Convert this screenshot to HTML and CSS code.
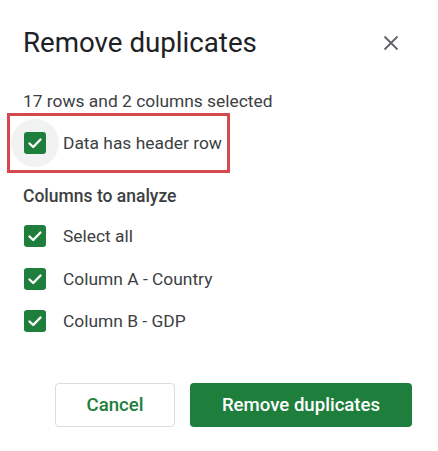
FILE: index.html
```html
<!DOCTYPE html>
<html>
<head>
<meta charset="utf-8">
<link rel="stylesheet" href="styles.css">
</head>
<body>
<div class="dialog">
  <div class="header">
    <div class="title">Remove duplicates</div>
    <svg class="close" width="16" height="16" viewBox="0 0 16 16"><path d="M1.5 1.5 L14.5 14.5 M14.5 1.5 L1.5 14.5" stroke="#5f6368" stroke-width="1.8" fill="none"/></svg>
  </div>
  <div class="subtitle">17 rows and 2 columns selected</div>
  <div class="highlight">
    <div class="halo">
      <span class="cb"><svg width="22" height="22" viewBox="0 0 22 22"><path d="M5.5 11.5 L9.2 15 L16.5 7.5" stroke="#fff" stroke-width="2.4" fill="none" stroke-linecap="round" stroke-linejoin="round"/></svg></span>
    </div>
    <span class="label">Data has header row</span>
  </div>
  <div class="section">Columns to analyze</div>
  <div class="rows">
    <div class="row">
      <span class="cb"><svg width="22" height="22" viewBox="0 0 22 22"><path d="M5.5 11.5 L9.2 15 L16.5 7.5" stroke="#fff" stroke-width="2.4" fill="none" stroke-linecap="round" stroke-linejoin="round"/></svg></span>
      <span class="label">Select all</span>
    </div>
    <div class="row">
      <span class="cb"><svg width="22" height="22" viewBox="0 0 22 22"><path d="M5.5 11.5 L9.2 15 L16.5 7.5" stroke="#fff" stroke-width="2.4" fill="none" stroke-linecap="round" stroke-linejoin="round"/></svg></span>
      <span class="label">Column A - Country</span>
    </div>
    <div class="row">
      <span class="cb"><svg width="22" height="22" viewBox="0 0 22 22"><path d="M5.5 11.5 L9.2 15 L16.5 7.5" stroke="#fff" stroke-width="2.4" fill="none" stroke-linecap="round" stroke-linejoin="round"/></svg></span>
      <span class="label">Column B - GDP</span>
    </div>
  </div>
  <div class="actions">
    <button class="btn cancel">Cancel</button>
    <button class="btn primary">Remove duplicates</button>
  </div>
</div>
</body>
</html>
```
FILE: styles.css
```css
html, body {
  margin: 0;
  padding: 0;
  background: #fff;
}
.dialog {
  width: 438px;
  height: 451px;
  box-sizing: border-box;
  padding: 27px 26px 0 23px;
  font-family: Roboto, "Liberation Sans", Arial, sans-serif;
  color: #3c4043;
}
.header {
  display: flex;
  justify-content: space-between;
  align-items: center;
  height: 32px;
}
.title {
  font-size: 27.7px;
  line-height: 32px;
  color: #202124;
  white-space: nowrap;
}
.close {
  margin-right: 13px;
}
.subtitle {
  margin-top: 32px;
  font-size: 17.4px;
  line-height: 20px;
  color: #3c4043;
  white-space: nowrap;
}
.highlight {
  margin-top: 2px;
  margin-left: -16px;
  width: 223px;
  height: 60px;
  box-sizing: border-box;
  border: 3px solid #d5484e;
  display: flex;
  align-items: center;
  padding-left: 1px;
}
.halo {
  width: 48px;
  height: 48px;
  border-radius: 50%;
  background: #f1f3f2;
  display: flex;
  align-items: center;
  justify-content: center;
  flex: none;
}
.cb {
  width: 22px;
  height: 22px;
  border-radius: 3px;
  background: #1e7e3c;
  display: block;
  flex: none;
}
.cb svg {
  display: block;
}
.highlight .label {
  margin-left: 4px;
}
.label {
  font-size: 17.4px;
  line-height: 22px;
  color: #3c4043;
  white-space: nowrap;
}
.section {
  margin-top: 13px;
  font-size: 17.5px;
  line-height: 20px;
  font-weight: 500;
  color: #3c4043;
  white-space: nowrap;
}
.rows {
  margin-top: 19px;
  display: flex;
  flex-direction: column;
  gap: 20.5px;
  padding-left: 1px;
}
.row {
  display: flex;
  align-items: center;
  height: 22px;
  gap: 17px;
}
.actions {
  margin-top: 51px;
  display: flex;
  justify-content: flex-end;
  gap: 15px;
}
.btn {
  height: 44px;
  border-radius: 4px;
  font-family: Roboto, "Liberation Sans", Arial, sans-serif;
  font-size: 18.6px;
  font-weight: 500;
  padding: 0;
  cursor: pointer;
}
.cancel {
  width: 120px;
  background: #fff;
  border: 1px solid #dadce0;
  color: #1e7e3c;
}
.primary {
  width: 222px;
  background: #1e7e3c;
  border: none;
  color: #fff;
}
```
